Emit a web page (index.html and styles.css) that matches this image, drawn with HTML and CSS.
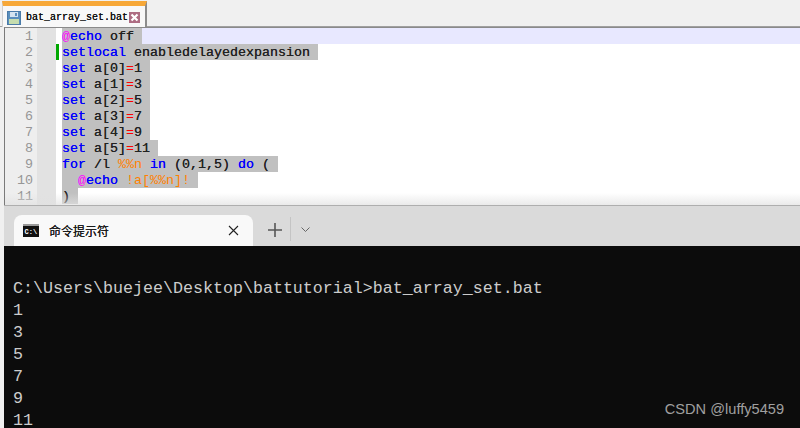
FILE: index.html
```html
<!DOCTYPE html>
<html lang="zh">
<head>
<meta charset="utf-8">
<title>bat_array_set.bat</title>
<link rel="stylesheet" href="styles.css">
</head>
<body>
<div class="page">
  <div class="np-tabs">
    <div class="np-tab">
      <svg class="save-icon" width="14" height="14" viewBox="0 0 14 14"><rect x="0.5" y="0.5" width="13" height="13" fill="#5b8fbd" stroke="#4a7ba8"/><rect x="3" y="1" width="8" height="5" fill="#d5e4f0"/><rect x="8" y="2" width="2" height="3" fill="#5b8fbd"/><rect x="2" y="8" width="10" height="5" fill="#c5dcae"/></svg>
      <span class="np-tab-name">bat_array_set.bat</span>
      <svg class="close-icon" width="11" height="11" viewBox="0 0 11 11"><rect width="11" height="11" fill="#ad6c82"/><path d="M2.5 2.5l6 6M8.5 2.5l-6 6" stroke="#fff" stroke-width="2.2"/></svg>
    </div>
  </div>
  <div class="editor">
    <div class="gutter">
      <span>1</span><span>2</span><span>3</span><span>4</span><span>5</span><span>6</span><span>7</span><span>8</span><span>9</span><span>10</span><span>11</span>
    </div>
    <div class="fold">
      <i class="change-bar"></i>
    </div>
    <div class="code">
      <div class="line active"><span class="sel"><b class="at">@</b><b class="kw">echo</b> off&nbsp;</span></div>
      <div class="line"><span class="sel"><b class="kw">setlocal</b> enabledelayedexpansion&nbsp;</span></div>
      <div class="line"><span class="sel"><b class="kw">set</b> a[0]<b class="op">=</b>1&nbsp;</span></div>
      <div class="line"><span class="sel"><b class="kw">set</b> a[1]<b class="op">=</b>3&nbsp;</span></div>
      <div class="line"><span class="sel"><b class="kw">set</b> a[2]<b class="op">=</b>5&nbsp;</span></div>
      <div class="line"><span class="sel"><b class="kw">set</b> a[3]<b class="op">=</b>7&nbsp;</span></div>
      <div class="line"><span class="sel"><b class="kw">set</b> a[4]<b class="op">=</b>9&nbsp;</span></div>
      <div class="line"><span class="sel"><b class="kw">set</b> a[5]<b class="op">=</b>11&nbsp;</span></div>
      <div class="line"><span class="sel"><b class="kw">for</b> /l <b class="var">%%n</b> <b class="kw">in</b> (0,1,5) <b class="kw">do</b> (&nbsp;</span></div>
      <div class="line"><span class="sel">&nbsp;&nbsp;<b class="at">@</b><b class="kw">echo</b> <b class="var">!a[%%n]!</b>&nbsp;</span></div>
      <div class="line"><span class="sel">)&nbsp;</span></div>
    </div>
    <i class="editor-fade"></i>
  </div>
  <div class="term-tabs">
    <div class="term-tab">
      <svg class="cmd-icon" width="16" height="13" viewBox="0 0 16 13"><rect width="16" height="13" fill="#111"/><rect y="0" width="16" height="2" fill="#9a9a9a"/><text x="1.5" y="10" class="cmd-glyph">C:\</text></svg>
      <span class="term-title">命令提示符</span>
      <svg class="term-close" width="11" height="11" viewBox="0 0 11 11"><path d="M1 1l9 9M10 1l-9 9" stroke="#222" stroke-width="1.1" fill="none"/></svg>
    </div>
    <svg class="term-plus" width="14" height="14" viewBox="0 0 14 14"><path d="M7 0v14M0 7h14" stroke="#555" stroke-width="1.6"/></svg>
    <i class="term-sep"></i>
    <svg class="term-chevron" width="9" height="5" viewBox="0 0 9 5"><path d="M0.5 0.5l4 4 4-4" stroke="#666" stroke-width="1" fill="none"/></svg>
  </div>
  <div class="console">C:\Users\buejee\Desktop\battutorial&gt;bat_array_set.bat
1
3
5
7
9
11</div>
  <div class="watermark">CSDN @luffy5459</div>
</div>
</body>
</html>
```
FILE: styles.css
```css
* { box-sizing: border-box; }
html, body { margin: 0; padding: 0; }
body { width: 800px; height: 428px; overflow: hidden; background: #f0f0f0; }
.page { position: relative; width: 800px; height: 428px; display: flex; flex-direction: column; overflow: hidden; background: #f0f0f0; }

.np-tabs { flex: none; height: 27px; padding-left: 2px; background: #f0f0f0; border-bottom: 1px solid #a0a0a0; }
.np-tab { width: 145px; height: 26px; margin-top: 1px; display: flex; align-items: center; padding: 2px 0 0 4px; background: #f8f8f8; border-top: 5px solid #f7a838; border-right: 2px solid #8c8c8c; border-left: 1px solid #d0d0d0; }
.save-icon { flex: none; }
.np-tab-name { margin-left: 5px; width: 102px; font: 10px/14px "Liberation Mono", monospace; color: #111; white-space: pre; text-shadow: 0 0 0.3px #111; }
.close-icon { flex: none; margin-left: 1px; }

.editor { flex: none; height: 178px; margin-left: 4px; display: flex; background: #fff; border-left: 1px solid #7a7a7a; border-top: 1px solid #8a8a8a; overflow: hidden; position: relative; }
.gutter { flex: none; width: 32px; display: flex; flex-direction: column; background: #eeeeee; }
.gutter span { height: 16px; text-align: right; padding-right: 4px; font: 13.33px/18px "Liberation Mono", monospace; color: #969696; }
.fold { flex: none; width: 25px; position: relative; background: linear-gradient(to right, #e2e2e2 0 19px, #fff 19px); }
.change-bar { position: absolute; left: 19px; top: 16px; width: 3px; height: 16px; background: #00a800; }
.code { flex: 1; font: 13.33px/18px "Liberation Mono", monospace; color: #222; }
.line { height: 16px; white-space: pre; }
.line.active { background: #e8e8ff; }
.sel { display: inline-block; vertical-align: top; height: 16px; background: #c0c0c0; text-shadow: 0 0 0.4px #222; }
.kw { color: #0000ff; font-weight: 400; text-shadow: 0 0 0.6px #0000ff; }
.at { color: #ff00ff; font-weight: 400; text-shadow: none; }
.op { color: #ff0000; font-weight: 400; text-shadow: none; }
.var { color: #ff8000; font-weight: 400; text-shadow: none; }
.editor-fade { position: absolute; left: 0; right: 0; bottom: 0; height: 12px; background: linear-gradient(to bottom, rgba(240,240,240,0), rgba(225,225,225,0.7)); pointer-events: none; }

.term-tabs { flex: none; height: 41px; margin-left: 4px; background: #dadada; border-top: 1px solid #aeaeae; display: flex; align-items: flex-end; padding-left: 10px; }
.term-tab { width: 239px; height: 31px; background: #f9f9f9; border-radius: 8px 8px 0 0; display: flex; align-items: center; padding: 0 14px 0 9px; }
.cmd-icon { flex: none; }
.cmd-glyph { font: 700 7px "Liberation Mono", monospace; fill: #fff; }
.term-title { margin-left: 10px; flex: 1; font: 12px/16px "Noto Sans CJK SC", sans-serif; color: #1a1a1a; text-shadow: 0 0 0.3px #1a1a1a; }
.term-close { flex: none; }
.term-plus { flex: none; margin: 0 0 9px 15px; }
.term-sep { flex: none; width: 1px; height: 24px; margin: 0 0 5px 8px; background: #c4c4c4; }
.term-chevron { flex: none; margin: 0 0 14px 10px; }

.console { flex: 1; padding: 32px 0 0 9px; background: #0c0c0c; border-left: 4px solid #f0f0f0; color: #cccccc; font: 16.67px/22px "Liberation Mono", monospace; white-space: pre; overflow: hidden; }
.watermark { position: absolute; right: 16px; bottom: 10px; font: 14.6px/18px "Liberation Sans", sans-serif; color: #a0a0a0; }
```
